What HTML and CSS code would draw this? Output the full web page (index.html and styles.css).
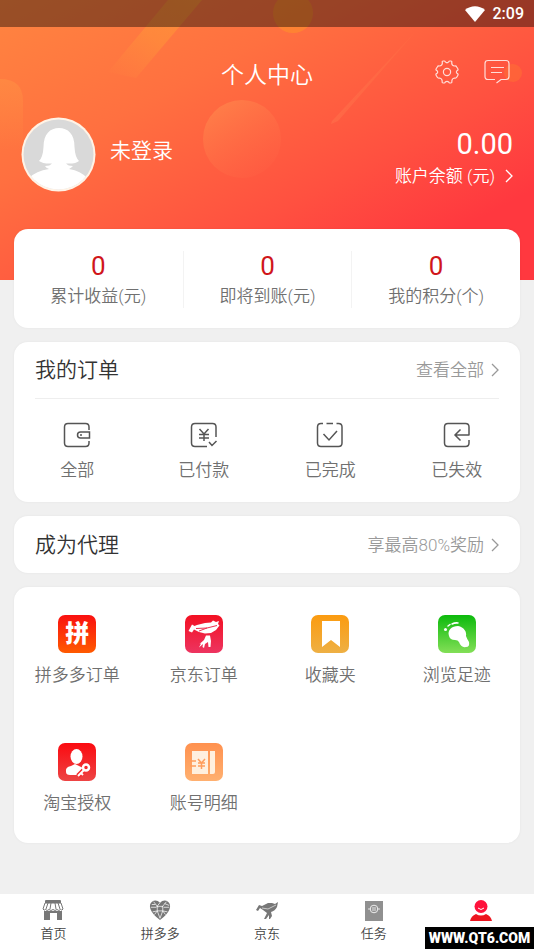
FILE: index.html
```html
<!DOCTYPE html>
<html lang="zh-CN">
<head>
<meta charset="utf-8">
<meta name="viewport" content="width=device-width, initial-scale=1">
<title>个人中心</title>
<link rel="stylesheet" href="styles.css">
</head>
<body>
<div class="page">
  <header class="hero">
    <svg class="hero-art" viewBox="0 0 534 280" preserveAspectRatio="none" aria-hidden="true">
      <defs>
        <linearGradient id="beam" x1="1" y1="0" x2="0" y2="1"><stop offset="0" stop-color="#ffb02e" stop-opacity=".4"/><stop offset=".5" stop-color="#ffa535" stop-opacity=".35"/><stop offset="1" stop-color="#ffa040" stop-opacity="0"/></linearGradient>
        <linearGradient id="ball" x1="0" y1="0" x2=".7" y2="1"><stop offset="0" stop-color="#ff9450" stop-opacity=".6"/><stop offset="1" stop-color="#ff6a48" stop-opacity=".15"/></linearGradient>
        <linearGradient id="ray" x1="1" y1="0" x2="0" y2="1"><stop offset="0" stop-color="#ff9a50" stop-opacity=".1"/><stop offset="1" stop-color="#ff9a60" stop-opacity=".2"/></linearGradient>
        <linearGradient id="edge" x1="0" y1="0" x2="0" y2="1"><stop offset="0" stop-color="#ff9a45" stop-opacity=".4"/><stop offset="1" stop-color="#ff9a45" stop-opacity="0"/></linearGradient>
      </defs>
      <path d="M168 0H202L136 78L108 72Z" fill="url(#beam)"/>
      <path d="M255 25L214 66L220 60Z" fill="url(#ray)"/>
      <path d="M416 31L332 121L331 124L338 121Z" fill="url(#ray)"/>
      <circle cx="242" cy="139" r="39" fill="url(#ball)"/>
      <path d="M0 79Q23 79 23 101V150H0Z" fill="url(#edge)"/>
      <circle cx="293" cy="13" r="20" fill="#ffa020" opacity=".4"/>
      <circle cx="513" cy="73" r="9" fill="#ff7a30" opacity=".4"/>
    </svg>
    <div class="status">
      <svg width="20" height="16" viewBox="0 0 20 16" aria-hidden="true"><path d="M0 4C6-1 14-1 20 4L10 16Z" fill="#fff"/></svg>
      <span>2:09</span>
    </div>
    <div class="nav">
      <h1>个人中心</h1>
      <div class="nav-actions">
        <button type="button" aria-label="设置">
          <svg width="26" height="26" viewBox="0 0 26 26"><path d="M8.4 4Q7.7 2 9.2 2H10.2Q11 2 11.3 2.9Q13 4.6 14.7 2.9Q15 2 15.8 2H16.8Q18.3 2 17.7 4Q17.8 6.8 20.5 7Q22.2 6.7 22.7 8L23.7 9.5Q24.7 11 23 11.6Q21.6 13 23 14.4Q24.7 15 23.8 16.5L22.7 18.3Q22 19.5 20.4 19Q18 19.5 17.8 22Q18.2 24 16.8 24H15.8Q15 24 14.7 23Q13 21.6 11.3 23Q11 24 10.2 24H9.2Q7.8 24 8.2 22Q8 19.5 5.6 19Q4 19.5 3.3 18.3L2.2 16.5Q1.3 15 3 14.4Q4.4 13 3 11.6Q1.3 11 2.3 9.5L3.3 8Q3.8 6.7 5.5 7Q8.2 6.8 8.4 4Z"/><circle cx="13" cy="13" r="3.6"/></svg>
        </button>
        <button type="button" aria-label="消息">
          <svg width="26" height="26" viewBox="0 0 26 26"><path d="M11 20.500H4Q1 20.500 1 17.500V4.500Q1 1.500 4 1.500H22Q25 1.500 25 4.500V17.500Q25 20.500 22 20.500H17L12.500 24M7 8.500H20M7 13.500H18"/></svg>
        </button>
      </div>
    </div>
    <div class="profile">
      <svg class="avatar" width="75" height="75" viewBox="0 0 75 75" role="img" aria-label="头像">
        <defs><clipPath id="face"><circle cx="37.500" cy="37.500" r="35"/></clipPath></defs>
        <circle cx="37.500" cy="37.500" r="37" fill="#fff3e6"/><circle cx="37.500" cy="37.500" r="35" fill="#d9d9d9"/>
        <path clip-path="url(#face)" fill="#fff" d="M18 44Q22 40 22.500 30C22.500 17 29 11 38 11S53.500 17 53.500 30Q54 40 58 44Q55 47 45 46.500Q47 49 52 49Q50 51 48 52Q60 54 66 61V75H8V61Q15 54 28 52Q25 51 24 49Q29 49 31 46.500Q22 47 18 44Z"/>
      </svg>
      <a class="user" href="#login">未登录</a>
      <a class="balance" href="#balance">
        <span class="amount">0.00</span>
        <span class="balance-label">账户余额 (元)<svg class="chevron" width="8" height="14" viewBox="0 0 8 14" aria-hidden="true"><path d="M1 1L7 7L1 13"/></svg></span>
      </a>
    </div>
  </header>

  <main>
    <section class="card stats">
      <div class="stat"><b>0</b><span>累计收益(元)</span></div>
      <div class="stat"><b>0</b><span>即将到账(元)</span></div>
      <div class="stat"><b>0</b><span>我的积分(个)</span></div>
    </section>

    <section class="card">
      <div class="row orders-head">
        <h2>我的订单</h2>
        <a class="more" href="#orders">查看全部<svg class="chevron" width="8" height="14" viewBox="0 0 8 14" aria-hidden="true"><path d="M1 1L7 7L1 13"/></svg></a>
      </div>
      <nav class="grid orders">
        <a href="#all"><svg class="line" width="28" height="26" viewBox="0 0 28 26"><path d="M26 8V5Q26 1.500 22.500 1.500H5Q1.500 1.500 1.500 5V21Q1.500 24.500 5 24.500H22.500Q26 24.500 26 21V19M26.500 10V16H17.500Q14.500 16 14.500 13T17.500 10ZM18 12V14"/></svg>全部</a>
        <a href="#paid"><svg class="line" width="28" height="26" viewBox="0 0 28 26"><path d="M26 15V5Q26 1.500 22.500 1.500H5Q1.500 1.500 1.500 5V21Q1.500 24.500 5 24.500H17M19 20L22 23.500L26.500 19M9.500 7L14 12L18.500 7M9 12.500H19M9 16H19M14 12V19"/></svg>已付款</a>
        <a href="#done"><svg class="line" width="28" height="26" viewBox="0 0 28 26"><path d="M7 1.500H5Q1.500 1.500 1.500 5V21Q1.500 24.500 5 24.500H22.500Q26 24.500 26 21V5Q26 1.500 22.500 1.500H20.500M10.500 1.500H17M7.500 12L13 18L21 9"/></svg>已完成</a>
        <a href="#expired"><svg class="line" width="28" height="26" viewBox="0 0 28 26"><path d="M26.500 13H12M17.500 7.500L12 13L17.500 18.500M26 13V5Q26 1.500 22.500 1.500H5Q1.500 1.500 1.500 5V21Q1.500 24.500 5 24.500H22.500Q26 24.500 26 21V18"/></svg>已失效</a>
      </nav>
    </section>

    <section class="card row agent">
      <h2>成为代理</h2>
      <a class="more" href="#agent">享最高80%奖励<svg class="chevron" width="8" height="14" viewBox="0 0 8 14" aria-hidden="true"><path d="M1 1L7 7L1 13"/></svg></a>
    </section>

    <nav class="card grid tools">
      <a href="#pdd"><span class="tile tile-pdd">拼</span>拼多多订单</a>
      <a href="#jd"><span class="tile tile-jd"><svg width="37" height="37" viewBox="0 0 37 37"><path fill="#fff" d="M3.500 15L7 8.500L9.500 10L12 9L20 7L26 6.500L28 4.500L31 6L34 5L33 8L34.500 9.500L31 14L26 17L20 17.500L14 16L9 13.500L7 16.500ZM21 19.500H25L26 25L25.500 31H23.500L23 26L20 28L19 32L17.500 31L18 28L14 31.500L16 27.500L14.500 28L19 24Z"/><path d="M11 12.500L22 12L32 9.500M14 15L22 12" stroke="#ed3050" fill="none"/></svg></span>京东订单</a>
      <a href="#fav"><span class="tile tile-fav"><svg width="37" height="37" viewBox="0 0 37 37"><path fill="#fff" d="M10 5H28V31L19 24L10 31Z"/></svg></span>收藏夹</a>
      <a href="#history"><span class="tile tile-foot"><svg width="37" height="37" viewBox="0 0 37 37"><path fill="#fff" d="M11 20C9 14 14 10 20 10C26 11 29 16 28 20Q29 23 31 26Q32 31 28 31Q23 32 21 26Q20 24 17 24Q12 24 11 20Z"/><circle cx="7.500" cy="13.500" r="1.500" fill="#fff"/><path d="M10 10L12 8.500M14 8Q17 6.500 20 7" stroke="#fff" stroke-width="1.500" stroke-linecap="round" fill="none"/></svg></span>浏览足迹</a>
      <a href="#taobao"><span class="tile tile-auth"><svg width="37" height="37" viewBox="0 0 37 37"><ellipse cx="17.500" cy="12.500" rx="6" ry="7.500" fill="#fff"/><path fill="#fff" d="M7 28Q6 23 12 22L16 20L20 22L24 24L18 31H11Q7 31 7 28Z"/><path d="M25 26L19 32" stroke="#f52a2c" stroke-width="5"/><circle cx="27" cy="23.500" r="3" fill="#f52a2c" stroke="#fff" stroke-width="2.500"/><path d="M25 26L19 32M22 29L24 31" stroke="#fff" stroke-width="2"/></svg></span>淘宝授权</a>
      <a href="#account"><span class="tile tile-bill"><svg width="37" height="37" viewBox="0 0 37 37"><path fill="#fff0df" d="M7 7H23V30H7ZM25 7H30V28Q30 30 28 30H25Z"/><path d="M5 17H11M5 22H11M13 15L16.500 19L20 15M13 19H20M13 22H20M16.500 19V25" fill="none" stroke="#ff9d5c" stroke-width="1.500"/></svg></span>账号明细</a>
    </nav>
  </main>

  <footer class="tabs">
    <a href="#home"><svg width="22" height="22" viewBox="0 0 22 22"><path d="M4 1H18Q19 1 19 2V4H3V2Q3 1 4 1ZM2 12H20V21H15V14H8V21H2Z" fill="#777"/><path d="M3 4H19L21 10Q20 12 18.500 10.500Q17 12.500 15 10.500Q13 12.500 11 10.500Q9 12.500 7 10.500Q5 12.500 3.500 10.500Q2 12 1 10ZM6 4L4 10M9 4L8 10M13 4L14 10M16 4L18 10" stroke="#777" fill="#fff"/></svg>首页</a>
    <a href="#pinduoduo"><svg width="22" height="22" viewBox="0 0 24 24"><path d="M12 4Q15 1 19 2Q25 5 22 12Q20 17 12 23Q4 17 2 12Q-1 5 5 2Q9 1 12 4Z" fill="#777"/><path d="M5 3L10 9M12 4L8 9M19 3L14 9M2 9H8M16 9H22M3 6L7 6M17 5L22 7M4 14L9 13L12 21L15 13L20 14M9 8H15V13H9ZM6 17L9 13M18 17L15 13" fill="none" stroke="#fff" stroke-width=".8"/></svg>拼多多</a>
    <a href="#jingdong"><svg width="24" height="22" viewBox="0 0 24 22"><path fill="#777" d="M1 11L4 6L7 7L13 4H17L20 5L23 3L22 8Q20 12 16 13L17 17L15 20H14V16L11 20H9L12 14L8 11L5 9L3 12Z"/><path d="M7 9L13 10L21 6" stroke="#ddd" stroke-width=".8" fill="none"/></svg>京东</a>
    <a href="#tasks"><svg width="22" height="22" viewBox="0 0 22 22"><path fill="#909090" d="M2 2H20V22H2Z"/><circle cx="11" cy="10" r="3.800" fill="none" stroke="#eee"/><path d="M5 10H8M14 10H17M9 9H13M9 11H13" stroke="#eee" stroke-width=".9"/></svg>任务</a>
    <a href="#me" aria-label="个人中心"><svg width="22" height="22" viewBox="0 0 22 22"><circle cx="11" cy="7.500" r="6.500" fill="#ff123c"/><path d="M8 9Q11 12 14 9" stroke="#fff" fill="none"/><path d="M0 22Q1 17 6 15Q11 18 16 15Q21 17 22 22Z" fill="#ed1620"/></svg></a>
    <span class="watermark">WWW.QT6.COM</span>
  </footer>
</div>
</body>
</html>
```
FILE: styles.css
```css
* { box-sizing: border-box; }
body {
  margin: 0;
  background: #f0f0f0;
  color: #707070;
  font: 350 17px/24px Roboto, "Noto Sans CJK SC", sans-serif;
}
a { color: inherit; text-decoration: none; }
h1, h2 { margin: 0; font-weight: inherit; }
button { padding: 0; border: 0; background: none; }
svg { display: block; flex: none; }
.page { display: flex; flex-direction: column; min-height: 100vh; }

.hero {
  position: relative;
  padding-bottom: 88px;
  color: #fff;
  background: linear-gradient(152deg, #ff8540 0%, #ff7040 32%, #ff5040 64%, #ff383f 84%);
}
.hero-art { position: absolute; inset: 0; width: 100%; height: 100%; }
.status {
  position: relative;
  display: flex;
  justify-content: flex-end;
  align-items: center;
  gap: 8px;
  height: 27px;
  padding: 0 10px;
  background: rgba(0, 0, 0, .4);
  font-size: 16px;
  font-weight: 500;
}
.nav {
  position: relative;
  display: grid;
  grid-template-columns: 1fr auto 1fr;
  align-items: center;
  height: 90px;
  padding: 0 24px;
}
.nav h1 { grid-column: 2; padding-top: 8px; font-size: 23px; line-height: 32px; }
.nav-actions { display: flex; justify-content: flex-end; gap: 24px; }
.nav-actions svg { fill: none; stroke: #fff; stroke-width: 1.2; opacity: .8; }
.profile { position: relative; display: flex; padding: 0 21px; }
.user { padding: 18px 14px; font-size: 21px; line-height: 32px; }
.balance { margin-left: auto; display: flex; flex-direction: column; align-items: flex-end; padding-top: 11px; }
.amount { font-size: 29px; line-height: 32px; font-weight: 400; }
.balance-label { display: flex; align-items: center; gap: 10px; line-height: 32px; }
.chevron { fill: none; stroke: currentColor; stroke-width: 1.3; }

main { position: relative; display: grid; gap: 14px; margin: -51px 14px 0; }
.card { background: #fff; border-radius: 14px; box-shadow: 0 0 3px rgba(0, 0, 0, .05); }
.stats { display: grid; grid-template-columns: repeat(3, 1fr); padding: 22px 0 20px; }
.stat { display: flex; flex-direction: column; align-items: center; gap: 4px; padding-top: 1px; }
.stat + .stat { border-left: 1px solid #f3f3f3; }
.stat b { font-size: 26px; line-height: 28px; font-weight: 400; color: #d0161b; }
.row { display: flex; align-items: center; justify-content: space-between; height: 57px; }
.row h2 { color: #333; font-size: 21px; line-height: 32px; }
.orders-head { margin: 0 21px; border-bottom: 1px solid #eee; }
.agent { padding: 0 21px; }
.more { display: flex; align-items: center; gap: 7px; color: #999; }
.grid { display: grid; grid-template-columns: repeat(4, 1fr); }
.grid a { display: flex; flex-direction: column; align-items: center; gap: 10px; }
.orders { padding: 23px 0 20px; }
.line { fill: none; stroke: #555; stroke-width: 1.5; }
.tools { padding: 28px 0; row-gap: 56px; }
.tile {
  display: grid;
  place-items: center;
  width: 38px;
  height: 38px;
  border-radius: 7px;
  overflow: hidden;
  color: #fff;
}
.tile-pdd { background: linear-gradient(#fa1010, #ff5a00); font-size: 24px; font-weight: 900; }
.tile-jd { background: linear-gradient(#f31022, #ed3460); }
.tile-fav { background: linear-gradient(#fb9b10, #eeb044); }
.tile-foot { background: linear-gradient(#0cba0c, #83df57); }
.tile-auth { background: linear-gradient(#fb0a10, #ed4444); }
.tile-bill { background: linear-gradient(#ff914f, #ffb070); }

.tabs {
  position: relative;
  display: grid;
  grid-template-columns: repeat(5, 1fr);
  margin-top: auto;
  padding: 5px 0;
  background: #fff;
  color: #444;
  font-size: 13px;
  line-height: 20px;
}
.tabs a { display: flex; flex-direction: column; align-items: center; gap: 3px; }
.watermark {
  position: absolute;
  right: 0;
  bottom: 0;
  width: 109px;
  background: #000;
  color: #fff;
  font-size: 14px;
  line-height: 22px;
  font-weight: 900;
  text-align: center;
}
```
